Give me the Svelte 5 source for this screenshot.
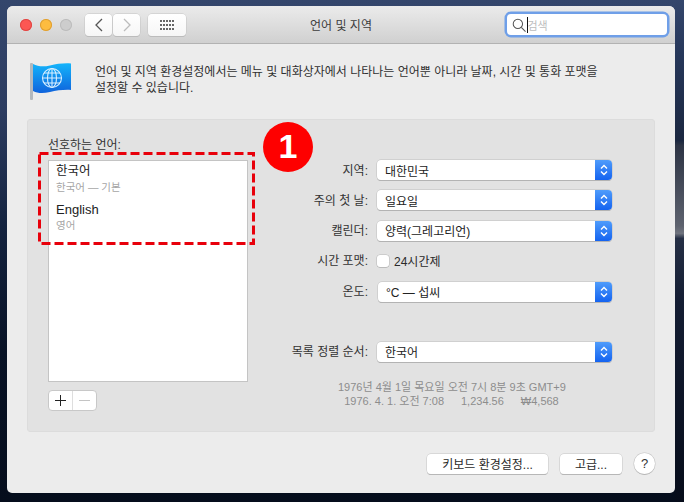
<script>
  const rows = [
    { label: '지역:', value: '대한민국' },
    { label: '주의 첫 날:', value: '일요일' },
    { label: '캘린더:', value: '양력(그레고리언)' }
  ];
</script>

{#snippet stepper()}
  <span class="stepper">
    <svg width="10" height="16" viewBox="0 0 10 16" fill="none" stroke="#fff" stroke-width="1.4">
      <path d="M2 6.500 5 3.500 8 6.500" />
      <path d="M2 9.500 5 12.500 8 9.500" />
    </svg>
  </span>
{/snippet}

<main class="desktop">
  <div class="window">
    <header class="titlebar">
      <div class="lights">
        <span class="light red"></span>
        <span class="light yellow"></span>
        <span class="light grey"></span>
      </div>
      <div class="nav">
        <button class="tool nav-btn" aria-label="뒤로">
          <svg width="10" height="14" viewBox="0 0 10 14" fill="none" stroke="#555" stroke-width="1.3"><path d="M8 1 2 7l6 6" /></svg>
        </button>
        <button class="tool nav-btn" aria-label="앞으로">
          <svg width="10" height="14" viewBox="0 0 10 14" fill="none" stroke="#bcbcbc" stroke-width="1.3"><path d="M2 1l6 6-6 6" /></svg>
        </button>
      </div>
      <button class="tool grid-btn" aria-label="모두 보기">
        <span class="dots">
          {#each Array(15) as _}<i></i>{/each}
        </span>
      </button>
      <h1>언어 및 지역</h1>
      <div class="search">
        <svg width="14" height="14" viewBox="0 0 15 15" fill="none" stroke="#555" stroke-width="1.1">
          <circle cx="6.300" cy="6.300" r="5" />
          <path d="M10 10l4.500 4.500" />
        </svg>
        <span class="caret"></span>
        <span class="placeholder">검색</span>
      </div>
    </header>

    <section class="intro">
      <svg class="flag" width="44" height="40" viewBox="0 0 44 40">
        <defs>
          <linearGradient id="flagfill" x1="0" y1="0" x2="0" y2="1">
            <stop offset="0" stop-color="#14b4fb" />
            <stop offset="1" stop-color="#0f63dc" />
          </linearGradient>
        </defs>
        <rect x="1" y="1" width="3" height="37" rx="1" fill="#b3b8bd" />
        <path d="M4 2c5 2.500 10 3 17 1.500S34 1 42 1.500V28c-7 -.5 -14 .5 -21 2S9 31.500 4 29Z" fill="url(#flagfill)" />
        <g fill="none" stroke="#d8efff" stroke-width="1.100">
          <circle cx="23" cy="16" r="9.500" />
          <ellipse cx="23" cy="16" rx="4.500" ry="9.500" />
          <path d="M23 6.500v19M13.500 16h19M15 11h16M15 21h16" />
        </g>
      </svg>
      <p>언어 및 지역 환경설정에서는 메뉴 및 대화상자에서 나타나는 언어뿐 아니라 날짜, 시간 및 통화 포맷을<br />설정할 수 있습니다.</p>
    </section>

    <section class="panel">
      <div class="languages">
        <div class="list-title">선호하는 언어:</div>
        <ul class="list">
          <li><span class="name ko">한국어</span><span class="sub">한국어 — 기본</span></li>
          <li><span class="name">English</span><span class="sub">영어</span></li>
        </ul>
        <div class="addremove">
          <button aria-label="추가">
            <svg width="13" height="13" viewBox="0 0 13 13" stroke="#222" stroke-width="1"><path d="M6.500 1v11M1 6.500h11" /></svg>
          </button>
          <button aria-label="제거">
            <svg width="13" height="13" viewBox="0 0 13 13" stroke="#c4c4c4" stroke-width="1"><path d="M1 6.500h11" /></svg>
          </button>
        </div>
      </div>

      <div class="settings">
        {#each rows as row}
          <div class="row">
            <span class="label">{row.label}</span>
            <div class="select"><span>{row.value}</span>{@render stepper()}</div>
          </div>
        {/each}
        <div class="row check-row">
          <span class="label">시간 포맷:</span>
          <span class="checkbox"></span>
          <span class="check-text">24시간제</span>
        </div>
        <div class="row temp-row">
          <span class="label">온도:</span>
          <div class="select temp"><span>°C — 섭씨</span>{@render stepper()}</div>
        </div>
        <div class="row sort-row">
          <span class="label">목록 정렬 순서:</span>
          <div class="select"><span>한국어</span>{@render stepper()}</div>
        </div>
        <div class="sample">
          <div>1976년 4월 1일 목요일 오전 7시 8분 9초 GMT+9</div>
          <div class="sample-line">
            <span>1976. 4. 1. 오전 7:08</span><span>1,234.56</span><span>₩4,568</span>
          </div>
        </div>
      </div>

      <svg class="dashed" width="217" height="93" viewBox="0 0 217 93" fill="none">
        <rect x="1.500" y="1.500" width="214" height="90" stroke="#e8000b" stroke-width="3" stroke-dasharray="9 4" />
      </svg>
      <div class="badge">1</div>
    </section>

    <footer class="actions">
      <button class="action keyboard">키보드 환경설정...</button>
      <button class="action advanced">고급...</button>
      <button class="help">?</button>
    </footer>
  </div>
</main>

<style>
  :global(body) {
    margin: 0;
    background: #0a1528;
  }

  .desktop {
    width: 684px;
    height: 502px;
    overflow: hidden;
    padding: 6px 9px 9px 7px;
    box-sizing: border-box;
    background:
      linear-gradient(#34466c 0%, #26375a 11%, #1b2740 28%, #2d3445 29%, #5d626e 45%, #70747f 46.500%, #252f45 47.500%, #141d33 60%, #060c1a 100%) right / 9px 100% no-repeat,
      linear-gradient(#34466c 0%, #2c3c60 22%, #14233f 45%, #081225 70%, #050d1c 100%);
    font-family: "Liberation Sans", "Noto Sans CJK KR", sans-serif;
    color: #2a2a2a;
  }

  .window {
    height: 487px;
    background: #ececec;
    border-radius: 6px 6px 5px 5px;
    overflow: hidden;
  }

  .titlebar {
    height: 38px;
    box-sizing: border-box;
    display: flex;
    align-items: center;
    position: relative;
    background: linear-gradient(#ebebeb, #d0d0d0);
    border-bottom: 1px solid #b2b2b2;
    padding: 0 8px 0 13px;
  }

  .lights {
    display: flex;
    gap: 8px;
    margin-right: 13px;
  }

  .light {
    width: 12px;
    height: 12px;
    border-radius: 50%;
  }
  .red { background: #fc5753; box-shadow: inset 0 0 0 1px #df4744; }
  .yellow { background: #fdbc40; box-shadow: inset 0 0 0 1px #de9f34; }
  .grey { background: #cdcdcd; box-shadow: inset 0 0 0 1px #bcbcbc; }

  button {
    font: inherit;
    color: inherit;
    padding: 0;
  }

  .tool {
    height: 22px;
    display: flex;
    align-items: center;
    justify-content: center;
    background: linear-gradient(#fff, #f6f6f6);
    border: none;
    border-radius: 4px;
    box-shadow: 0 0 0 .5px #c4c4c4, 0 1px 0 #b5b5b5;
  }

  .nav {
    display: flex;
    gap: 1px;
    margin-right: 8px;
  }

  .nav-btn { width: 27px; }

  .grid-btn { width: 38px; }

  .dots {
    display: grid;
    grid-template-columns: repeat(5, 2px);
    gap: 2px 1px;
    justify-content: center;
  }
  .dots i {
    width: 2px;
    height: 2px;
    background: #666;
  }

  h1 {
    position: absolute;
    left: 0;
    right: 0;
    margin: 0;
    text-align: center;
    font-size: 12px;
    font-weight: 400;
    color: #3c3c3c;
    pointer-events: none;
  }

  .search {
    width: 160px;
    height: 21px;
    margin-left: auto;
    display: flex;
    align-items: center;
    padding-left: 5px;
    box-sizing: border-box;
    background: #fff;
    border-radius: 4px;
    box-shadow: 0 0 0 2.500px #6f9fe8;
  }

  .caret {
    width: 1px;
    height: 16px;
    background: #111;
    margin-left: .5px;
  }

  .placeholder {
    font-size: 11px;
    color: #bdbdbd;
  }

  .intro {
    height: 75px;
    display: flex;
    padding: 18px 0 0 22px;
    box-sizing: border-box;
  }

  .flag {
    margin-right: 22px;
    flex: none;
  }

  .intro p {
    margin: 2px 0 0;
    font-size: 12px;
    line-height: 16px;
    color: #303030;
    white-space: nowrap;
  }

  .panel {
    position: relative;
    width: 628px;
    height: 313px;
    margin-left: 20px;
    display: flex;
    box-sizing: border-box;
    background: #e2e2e2;
    border: 1px solid #dcdcdc;
    border-radius: 3px;
    padding: 0 0 0 20px;
  }

  .languages {
    width: 200px;
  }

  .list-title {
    margin-top: 17px;
    height: 23px;
    font-size: 12px;
    line-height: 16px;
    color: #333;
  }

  .list {
    list-style: none;
    margin: 0;
    padding: 2px 0 0 7px;
    height: 222px;
    box-sizing: border-box;
    background: #fff;
    border: 1px solid #c4c4c4;
  }

  .list li {
    display: flex;
    flex-direction: column;
    height: 37.500px;
  }

  .name {
    font-size: 13px;
    line-height: 17px;
    color: #222;
  }

  .name.ko {
    font-size: 12.500px;
  }

  .sub {
    font-size: 10.500px;
    line-height: 15px;
    color: #a5a5a5;
  }

  .addremove {
    display: flex;
    width: 49px;
    height: 21px;
    margin-top: 8px;
    box-sizing: border-box;
    background: #fff;
    border-radius: 4px;
    border: 1px solid #c8c8c8;
  }

  .addremove button {
    flex: 1;
    border: none;
    background: none;
    display: flex;
    align-items: center;
    justify-content: center;
  }

  .addremove button + button {
    border-left: 1px solid #dedede;
  }

  .settings {
    margin-left: 26px;
    padding-top: 40px;
    width: 338px;
  }

  .row {
    display: flex;
    align-items: center;
    height: 20px;
    margin-bottom: 10.300px;
    font-size: 12px;
  }

  .label {
    width: 94px;
    text-align: right;
    margin-right: 9px;
    color: #333;
    flex: none;
    white-space: nowrap;
    position: relative;
    top: -1px;
  }

  .select {
    width: 235px;
    height: 20px;
    box-sizing: border-box;
    display: flex;
    align-items: center;
    justify-content: space-between;
    padding-left: 8px;
    background: #fff;
    border-radius: 4px;
    box-shadow: 0 0 0 .5px #bdbdbd, 0 1px 0 #a8a8a8;
    font-size: 12px;
    color: #222;
    overflow: hidden;
  }

  .select.temp {
    width: 234px;
    margin-left: 1px;
  }

  .stepper {
    width: 17px;
    height: 100%;
    display: flex;
    align-items: center;
    justify-content: center;
    background: linear-gradient(#4f9cfb, #1463f0);
  }

  .checkbox {
    width: 12px;
    height: 12px;
    margin-right: 5px;
    background: #fff;
    border-radius: 3px;
    box-shadow: 0 0 0 .5px #b5b5b5, 0 .5px 0 #a0a0a0;
  }

  .check-row { margin-bottom: 11px; }
  .temp-row { margin-bottom: 40px; }
  .sort-row { margin-bottom: 18px; }

  .sample {
    width: 227px;
    margin-left: 64px;
    font-size: 11px;
    line-height: 14px;
    color: #8d8d8d;
    text-align: center;
    white-space: nowrap;
  }

  .sample-line {
    display: flex;
    justify-content: center;
    gap: 17px;
  }

  .dashed {
    position: absolute;
    left: 10px;
    top: 32px;
  }

  .badge {
    position: absolute;
    left: 235px;
    top: 2px;
    width: 50px;
    height: 50px;
    border-radius: 50%;
    background: #fe0000;
    color: #fff;
    font-size: 34px;
    font-weight: 700;
    line-height: 48px;
    text-align: center;
  }

  .actions {
    display: flex;
    justify-content: flex-end;
    align-items: center;
    height: 21px;
    margin-top: 21px;
    padding-right: 20px;
    gap: 12px;
  }

  .action {
    height: 20px;
    background: #fff;
    border: none;
    border-radius: 4px;
    box-shadow: 0 0 0 .5px #c4c4c4, 0 1px 0 #aaa;
    font-size: 12px;
    color: #2a2a2a;
  }

  .keyboard { width: 121px; }
  .advanced { width: 62px; }

  .help {
    width: 21px;
    height: 21px;
    border-radius: 50%;
    border: none;
    background: #fff;
    box-shadow: 0 0 0 .5px #c4c4c4, 0 1px 0 #aaa;
    font-size: 13px;
    color: #333;
  }
</style>
